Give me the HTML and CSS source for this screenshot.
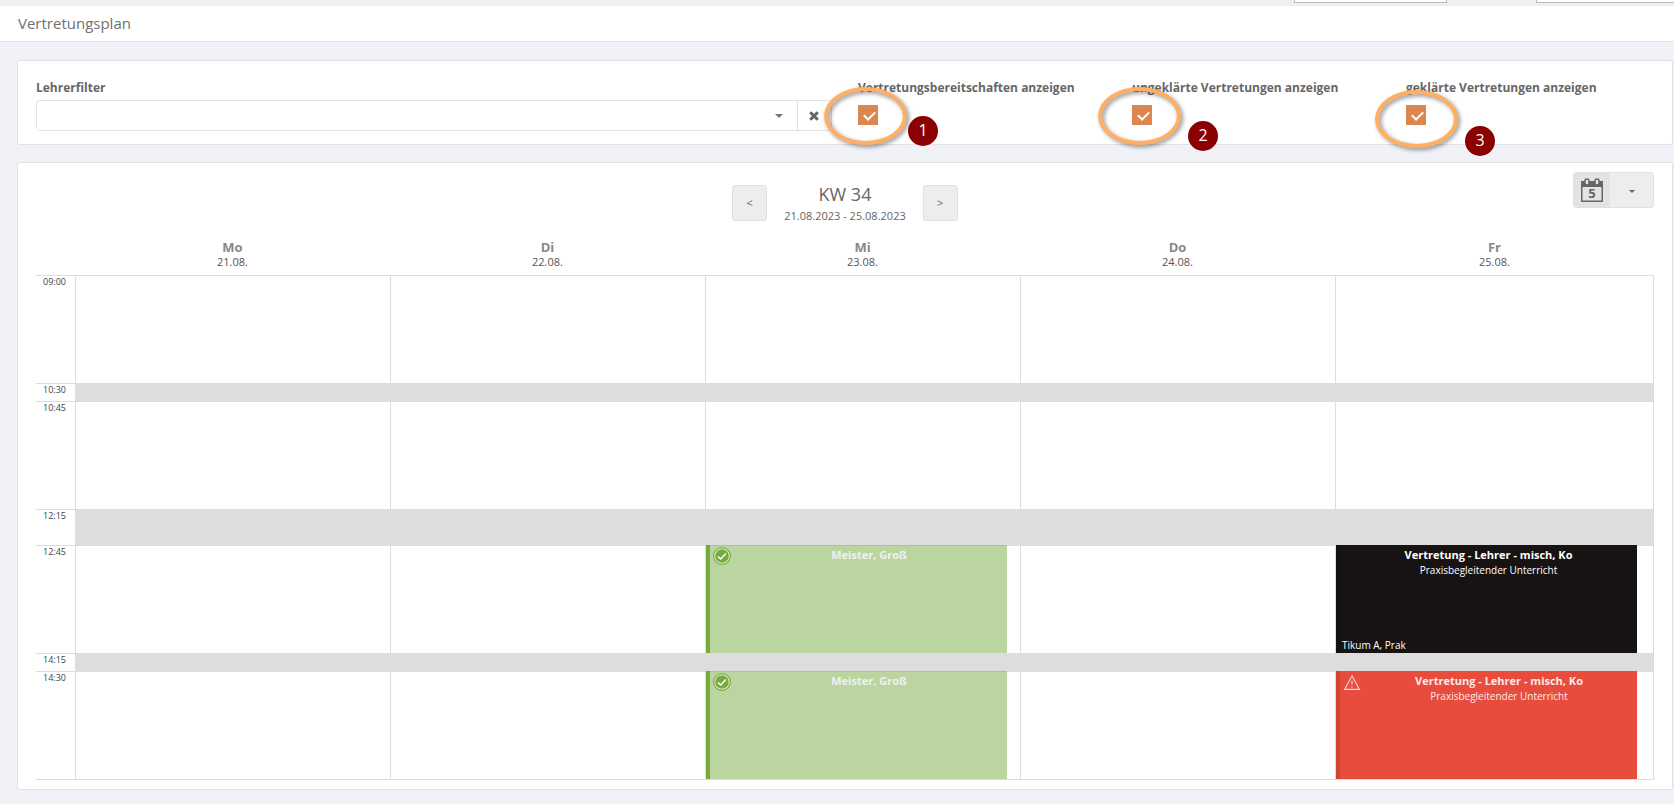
FILE: index.html
```html
<!DOCTYPE html>
<html lang="de">
<head>
    <meta charset="UTF-8">
    <meta name="viewport" content="width=device-width, initial-scale=1.0">
    <title>Vertretungsplan</title>
    <link rel="stylesheet" href="styles.css">
</head>
<body>
    <div class="topbar">
        <div class="topbar-box"></div>
        <div class="topbar-box"></div>
    </div>
    <header class="page-header">
        <h1>Vertretungsplan</h1>
    </header>

    <main class="content">
        <section class="card filters">
            <div class="field field-wide">
                <label for="teacherFilter">Lehrerfilter</label>
                <div class="select-group">
                    <select id="teacherFilter">
                        <option></option>
                    </select>
                    <span class="caret"></span>
                    <button type="button" class="clear" aria-label="Filter löschen">
                        <svg width="10" height="10" viewBox="0 0 10 10"><path d="M1.2 1.2L8.8 8.8M8.8 1.2L1.2 8.8" stroke="#666" stroke-width="3"/></svg>
                    </button>
                </div>
            </div>
            <div class="field">
                <label for="showAvailable">Vertretungsbereitschaften anzeigen</label>
                <input type="checkbox" id="showAvailable" checked>
                <span class="ring"></span>
                <span class="marker marker-one">1</span>
            </div>
            <div class="field">
                <label for="showOpen">ungeklärte Vertretungen anzeigen</label>
                <input type="checkbox" id="showOpen" checked>
                <span class="ring"></span>
                <span class="marker marker-two">2</span>
            </div>
            <div class="field">
                <label for="showResolved">geklärte Vertretungen anzeigen</label>
                <input type="checkbox" id="showResolved" checked>
                <span class="ring ring-low"></span>
                <span class="marker marker-three">3</span>
            </div>
        </section>

        <section class="card calendar">
            <div class="calendar-head">
                <div class="week-nav">
                    <button type="button" class="btn">&lt;</button>
                    <div class="week">
                        <h2>KW 34</h2>
                        <p>21.08.2023 - 25.08.2023</p>
                    </div>
                    <button type="button" class="btn">&gt;</button>
                </div>
                <div class="view-switch">
                    <button type="button" class="view-active" aria-label="5-Tage-Ansicht">
                        <svg width="22" height="24" viewBox="0 0 22 24">
                            <path d="M0 3h22v21H0zM1.5 9v13.5h19V9z" fill="#666" fill-rule="evenodd"/>
                            <rect x="4" y="1" width="4" height="6" rx="2" fill="#e3e3e3" stroke="#666" stroke-width="1.5"/>
                            <rect x="14" y="1" width="4" height="6" rx="2" fill="#e3e3e3" stroke="#666" stroke-width="1.5"/>
                            <text x="11" y="20" text-anchor="middle" class="view-days">5</text>
                        </svg>
                    </button>
                    <button type="button" class="view-more" aria-label="Ansicht wählen"><span class="caret-small"></span></button>
                </div>
            </div>

            <table class="plan">
                <thead>
                    <tr>
                        <td class="time-head"></td>
                        <th>Mo<span>21.08.</span></th>
                        <th>Di<span>22.08.</span></th>
                        <th>Mi<span>23.08.</span></th>
                        <th>Do<span>24.08.</span></th>
                        <th class="last-day">Fr<span>25.08.</span></th>
                    </tr>
                </thead>
                <tbody>
                    <tr class="lesson">
                        <th>09:00</th><td></td><td></td><td></td><td></td><td></td>
                    </tr>
                    <tr class="break">
                        <th>10:30</th><td></td><td></td><td></td><td></td><td></td>
                    </tr>
                    <tr class="lesson">
                        <th>10:45</th><td></td><td></td><td></td><td></td><td></td>
                    </tr>
                    <tr class="break break-long">
                        <th>12:15</th><td></td><td></td><td></td><td></td><td></td>
                    </tr>
                    <tr class="lesson">
                        <th>12:45</th>
                        <td></td>
                        <td></td>
                        <td>
                            <div class="event event-green">
                                <svg class="event-icon" width="18" height="18" viewBox="0 0 18 18">
                                    <circle cx="9" cy="9" r="8.4" fill="#e4efd9" stroke="#77ab3c" stroke-width="1.2"/>
                                    <circle cx="9" cy="9" r="6.8" fill="#77ab3c"/>
                                    <path d="M5 9.4l2.7 2.6 5.2-5.4" fill="none" stroke="#fff" stroke-width="1.4"/>
                                </svg>
                                <div class="event-text"><strong>Meister, Groß</strong></div>
                            </div>
                        </td>
                        <td></td>
                        <td>
                            <div class="event event-black">
                                <div class="event-text">
                                    <strong>Vertretung - Lehrer - misch, Ko</strong>
                                    <span>Praxisbegleitender Unterricht</span>
                                    <span class="event-room">Tikum A, Prak</span>
                                </div>
                            </div>
                        </td>
                    </tr>
                    <tr class="break">
                        <th>14:15</th><td></td><td></td><td></td><td></td><td></td>
                    </tr>
                    <tr class="lesson">
                        <th>14:30</th>
                        <td></td>
                        <td></td>
                        <td>
                            <div class="event event-green">
                                <svg class="event-icon" width="18" height="18" viewBox="0 0 18 18">
                                    <circle cx="9" cy="9" r="8.4" fill="#e4efd9" stroke="#77ab3c" stroke-width="1.2"/>
                                    <circle cx="9" cy="9" r="6.8" fill="#77ab3c"/>
                                    <path d="M5 9.4l2.7 2.6 5.2-5.4" fill="none" stroke="#fff" stroke-width="1.4"/>
                                </svg>
                                <div class="event-text"><strong>Meister, Groß</strong></div>
                            </div>
                        </td>
                        <td></td>
                        <td>
                            <div class="event event-red">
                                <svg class="event-icon" width="18" height="18" viewBox="0 0 18 18">
                                    <path d="M9 2.8L16.4 16.4H1.6z" fill="none" stroke="#f8d5d0" stroke-width="1.1"/>
                                    <path d="M9 7.5v4.6M9 13.4v1.3" stroke="#f8d5d0" stroke-width="1.1"/>
                                </svg>
                                <div class="event-text">
                                    <strong>Vertretung - Lehrer - misch, Ko</strong>
                                    <span>Praxisbegleitender Unterricht</span>
                                </div>
                            </div>
                        </td>
                    </tr>
                </tbody>
            </table>
        </section>
    </main>
</body>
</html>
```
FILE: styles.css
```css
* {
    margin: 0;
    padding: 0;
    box-sizing: border-box;
    font-family: 'Open Sans', 'Noto Sans', sans-serif;
}

body {
    background: #f1f2f7;
    color: #666;
    font-size: 12px;
}

.topbar {
    display: flex;
    justify-content: flex-end;
    gap: 89px;
    height: 6px;
    background: #efefef;
}

.topbar-box {
    width: 153px;
    height: 3px;
    background: #fff;
    border: 1px solid #bbb;
    border-top: none;
}

.topbar-box:last-child {
    width: 138px;
    border-right: none;
}

.page-header {
    height: 36px;
    padding: 0 18px;
    background: #fff;
    border-bottom: 1px solid #e2e2e4;
}

h1 {
    color: #707070;
    font-size: 15px;
    font-weight: 400;
    line-height: 35px;
}

.content {
    display: flex;
    flex-direction: column;
    gap: 17px;
    padding: 18px 1px 14px 17px;
}

.card {
    background: #fff;
    border: 1px solid #e2e2e6;
    border-radius: 2px;
    padding: 0 18px;
}

/* filter row */
.filters {
    display: grid;
    grid-template-columns: repeat(12, 1fr);
    column-gap: 26px;
    padding-top: 18px;
    padding-bottom: 13px;
}

.field {
    position: relative;
    grid-column: span 2;
}

.field-wide {
    grid-column: span 6;
}

.field label {
    display: block;
    line-height: 18px;
    font-weight: 700;
    white-space: nowrap;
}

.select-group {
    display: flex;
    align-items: center;
    height: 31px;
    margin-top: 3px;
    border: 1px solid #e2e2e4;
    border-radius: 4px;
}

.select-group select {
    flex: 1;
    height: 29px;
    padding: 0 8px;
    border: none;
    background: none;
    appearance: none;
    outline: none;
}

.caret {
    margin-right: 14px;
    border: 4px solid transparent;
    border-top-color: #777;
    border-bottom: none;
}

.clear {
    height: 29px;
    width: 34px;
    padding-left: 11px;
    border: none;
    border-left: 1px solid #e2e2e4;
    background: none;
    text-align: left;
    line-height: 10px;
    cursor: pointer;
}

input[type="checkbox"] {
    display: block;
    width: 20px;
    height: 20px;
    margin-top: 8px;
    padding: 5px 6px;
    background: #dd8650;
    appearance: none;
}

input[type="checkbox"]:checked::before {
    content: '';
    display: block;
    width: 9px;
    height: 5px;
    border: solid #fff;
    border-width: 0 0 2px 2px;
    transform: translateY(1px) rotate(-45deg);
}

/* callouts drawn over the filters */
.ring {
    position: absolute;
    top: 8px;
    left: -34px;
    width: 83px;
    height: 58px;
    border: 4px solid #ffae62;
    border-radius: 50%;
    filter: drop-shadow(2px 2px 2px rgba(0, 0, 0, 0.45));
    pointer-events: none;
}

.ring-low {
    top: 11px;
    left: -31px;
}

.marker {
    position: absolute;
    width: 30px;
    height: 30px;
    border-radius: 50%;
    background: #8b0000;
    color: #fff;
    font-size: 16px;
    line-height: 28px;
    text-align: center;
}

.marker-one {
    top: 37px;
    left: 50px;
}

.marker-two {
    top: 42px;
    left: 56px;
}

.marker-three {
    top: 47px;
    left: 59px;
}

/* calendar */
.calendar {
    padding-bottom: 9px;
}

.calendar-head {
    display: grid;
    grid-template-columns: 1fr auto 1fr;
    align-items: start;
    padding-top: 9px;
    height: 77px;
}

.week-nav {
    grid-column: 2;
    display: flex;
    gap: 17px;
    padding-top: 13px;
}

.btn {
    width: 35px;
    height: 36px;
    padding-bottom: 2px;
    border: 1px solid #e0e0e0;
    border-radius: 3px;
    background: #ededed;
    color: #666;
    font-size: 11px;
    cursor: pointer;
}

.week {
    margin-top: -3px;
    text-align: center;
}

h2 {
    font-size: 18px;
    font-weight: 400;
    line-height: 24px;
}

.week p {
    font-size: 11px;
    line-height: 20px;
}

.view-switch {
    grid-column: 3;
    justify-self: end;
    display: flex;
    width: 81px;
    height: 36px;
    border: 1px solid #e0e0e0;
    border-radius: 3px;
    overflow: hidden;
}

.view-switch button {
    display: flex;
    align-items: center;
    justify-content: center;
    border: none;
    cursor: pointer;
}

.view-switch .view-active {
    width: 36px;
    background: #e3e3e3;
}

.view-switch .view-more {
    flex: 1;
    background: #ededed;
}

.view-days {
    font-size: 13px;
    font-weight: 700;
    fill: #666;
}

.caret-small {
    margin-top: 2px;
    border: 3px solid transparent;
    border-top-color: #666;
    border-bottom: none;
}

.plan {
    width: 100%;
    table-layout: fixed;
    border-spacing: 0;
    border-bottom: 1px solid #ddd;
}

.plan thead th {
    height: 35px;
    color: #888;
    font-size: 13px;
    line-height: 15px;
    vertical-align: top;
}

.plan thead span {
    display: block;
    color: #555;
    font-size: 11px;
    font-weight: 400;
    line-height: 14px;
}

.time-head {
    width: 39px;
}

.last-day {
    width: 319px;
}

.plan tbody th {
    padding-right: 9px;
    border-top: 1px solid #ddd;
    color: #444;
    font-size: 9px;
    font-weight: 400;
    line-height: 12px;
    text-align: right;
    vertical-align: top;
}

.plan tbody td {
    border-top: 1px solid #ddd;
    border-left: 1px solid #ddd;
    vertical-align: top;
}

.plan tbody td:last-child {
    border-right: 1px solid #ddd;
}

.lesson {
    height: 108px;
}

.break {
    height: 18px;
}

.break-long {
    height: 36px;
}

.break td {
    background: #ddd;
}

.event {
    display: flex;
    height: 108px;
    margin: -1px 13px 0 0;
    border-left: 4px solid;
    color: #fff;
    font-size: 10px;
}

.plan td:last-child .event {
    margin-right: 16px;
}

.event-icon {
    flex: none;
    margin: 2px 0 0 3px;
}

.event-text {
    flex: 1;
    display: flex;
    flex-direction: column;
    align-items: center;
    padding-top: 2px;
    line-height: 15px;
}

.event-text strong {
    font-size: 11px;
    line-height: 16px;
}

.event-room {
    align-self: flex-start;
    margin-top: auto;
    padding-left: 2px;
}

.event-green {
    background: #bad59f;
    border-color: #77ab3c;
    box-shadow: inset 0 1px #a9c68c;
    color: #f0f0f0;
}

.event-black {
    background: #171312;
    border-color: #131010;
}

.event-red {
    background: #e84c3d;
    border-color: #d04437;
    color: #fbe9e7;
}
```
